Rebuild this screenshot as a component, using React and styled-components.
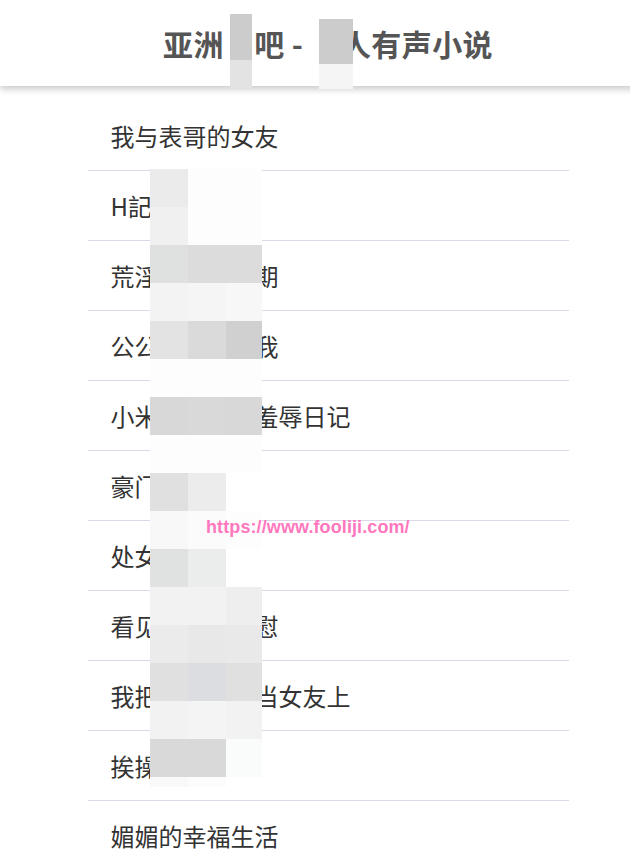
import React from 'react';
import styled, { createGlobalStyle } from 'styled-components';

const GlobalStyle = createGlobalStyle`
  html, body {
    margin: 0;
    padding: 0;
    background: #fff;
    overflow: hidden;
  }
  body {
    font-family: "Noto Sans CJK SC", "Noto Sans", sans-serif;
  }
`;

// page is a bit wider than the window, so its centre sits right of the viewport's
const Page = styled.div`
  position: relative;
  width: 656px;
  min-height: 854px;
`;

const Header = styled.header`
  height: 86px;
  display: flex;
  align-items: center;
  justify-content: center;
  background: #fff;
  box-shadow: 0 3px 7px rgba(0, 0, 0, 0.22);
  position: relative;
  z-index: 1;
`;

const Title = styled.h1`
  margin: 0;
  font-size: 30px;
  font-weight: 700;
  color: #555;
  white-space: pre;
  letter-spacing: 0.4px;
`;

const List = styled.ul`
  list-style: none;
  margin: 15px auto 0;
  padding: 0;
  width: 481px;
`;

const Row = styled.li`
  height: 69px;
  display: flex;
  align-items: center;
  padding-left: 23px;
  border-bottom: 1px solid #dcd8ea;
  font-size: 24px;
  color: #333;
  white-space: pre;
`;

// pixelated redaction blocks that lie over the text
const Patch = styled.div`
  position: absolute;
  z-index: 2;
  top: ${p => p.$top}px;
  left: ${p => p.$left}px;
  display: grid;
  grid-template-columns: ${p => p.$cols};
  grid-auto-rows: ${p => p.$rows};
`;

const Cell = styled.div`
  background: ${p => p.$c};
  height: ${p => (p.$h ? `${p.$h}px` : 'auto')};
`;

const Watermark = styled.div`
  position: absolute;
  z-index: 3;
  top: 517px;
  left: 206px;
  font-family: "Liberation Sans", Arial, sans-serif;
  font-weight: 700;
  font-size: 18px;
  color: #ff78bd;
  letter-spacing: 0.1px;
`;

const H = '\u3000';

const titles = [
  '我与表哥的女友',
  'H記' + H + H + H,
  '荒淫' + H + H + H + H + '期',
  '公公' + H + H + H + H + '我',
  '小米' + H + H + H + H + '羞辱日记',
  '豪门' + H + H,
  '处女' + H + H,
  '看见' + H + H + H + H + '慰',
  '我把' + H + H + H + H + '当女友上',
  '挨操' + H + H,
  '媚媚的幸福生活',
];

const mosaic = [
  ['#ebebeb', '#fdfdfd', '#fdfdfd'],
  ['#f0f0f0', '#fdfdfd', '#fdfdfd'],
  ['#dfe0e0', '#dcdcdc', '#dcdcdc'],
  ['#f3f3f3', '#f5f5f5', '#f7f7f7'],
  ['#e3e3e3', '#dadada', '#d0d0d0'],
  ['#fdfdfd', '#fdfdfd', '#fdfdfd'],
  ['#d8d8d8', '#d9d9d9', '#d8d8d8'],
  ['#fdfdfd', '#fdfdfd', '#fdfdfd'],
  ['#e0e0e0', '#ececec', '#ffffff'],
  ['#f8f8f8', '#fbfbfb', '#fdfdfd'],
  ['#e0e1e1', '#ebecec', '#ffffff'],
  ['#f2f2f2', '#f2f2f2', '#eeeeee'],
  ['#ebebeb', '#e8e8e8', '#e9e9e9'],
  ['#e0e0e0', '#dcdde0', '#e0e0e0'],
  ['#f2f2f2', '#f4f4f4', '#f2f2f2'],
  ['#d9d9d9', '#d9d9d9', '#fafbfb'],
];

export default function App() {
  return (
    <Page>
      <GlobalStyle />
      <Header>
        <Title>{'亚洲' + H + '吧 - ' + H + '人有声小说'}</Title>
      </Header>

      <Patch $top={14} $left={230} $cols="22px" $rows="auto">
        <Cell $c="#cccccc" $h={46} />
        <Cell $c="#e3e3e3" $h={28} />
      </Patch>
      <Patch $top={19} $left={319} $cols="34px" $rows="auto">
        <Cell $c="#cccccc" $h={45} />
        <Cell $c="#f5f5f5" $h={25} />
      </Patch>

      <List>
        {titles.map((t, i) => (
          <Row key={i}>{t}</Row>
        ))}
      </List>

      <Patch $top={169} $left={150} $cols="38px 38px 36px" $rows="38px">
        {mosaic.flat().map((c, i) => (
          <Cell key={i} $c={c} />
        ))}
        <Cell $c="#f9f9f9" $h={10} />
        <Cell $c="#fcfcfc" $h={10} />
      </Patch>

      <Watermark>https://www.fooliji.com/</Watermark>
    </Page>
  );
}
